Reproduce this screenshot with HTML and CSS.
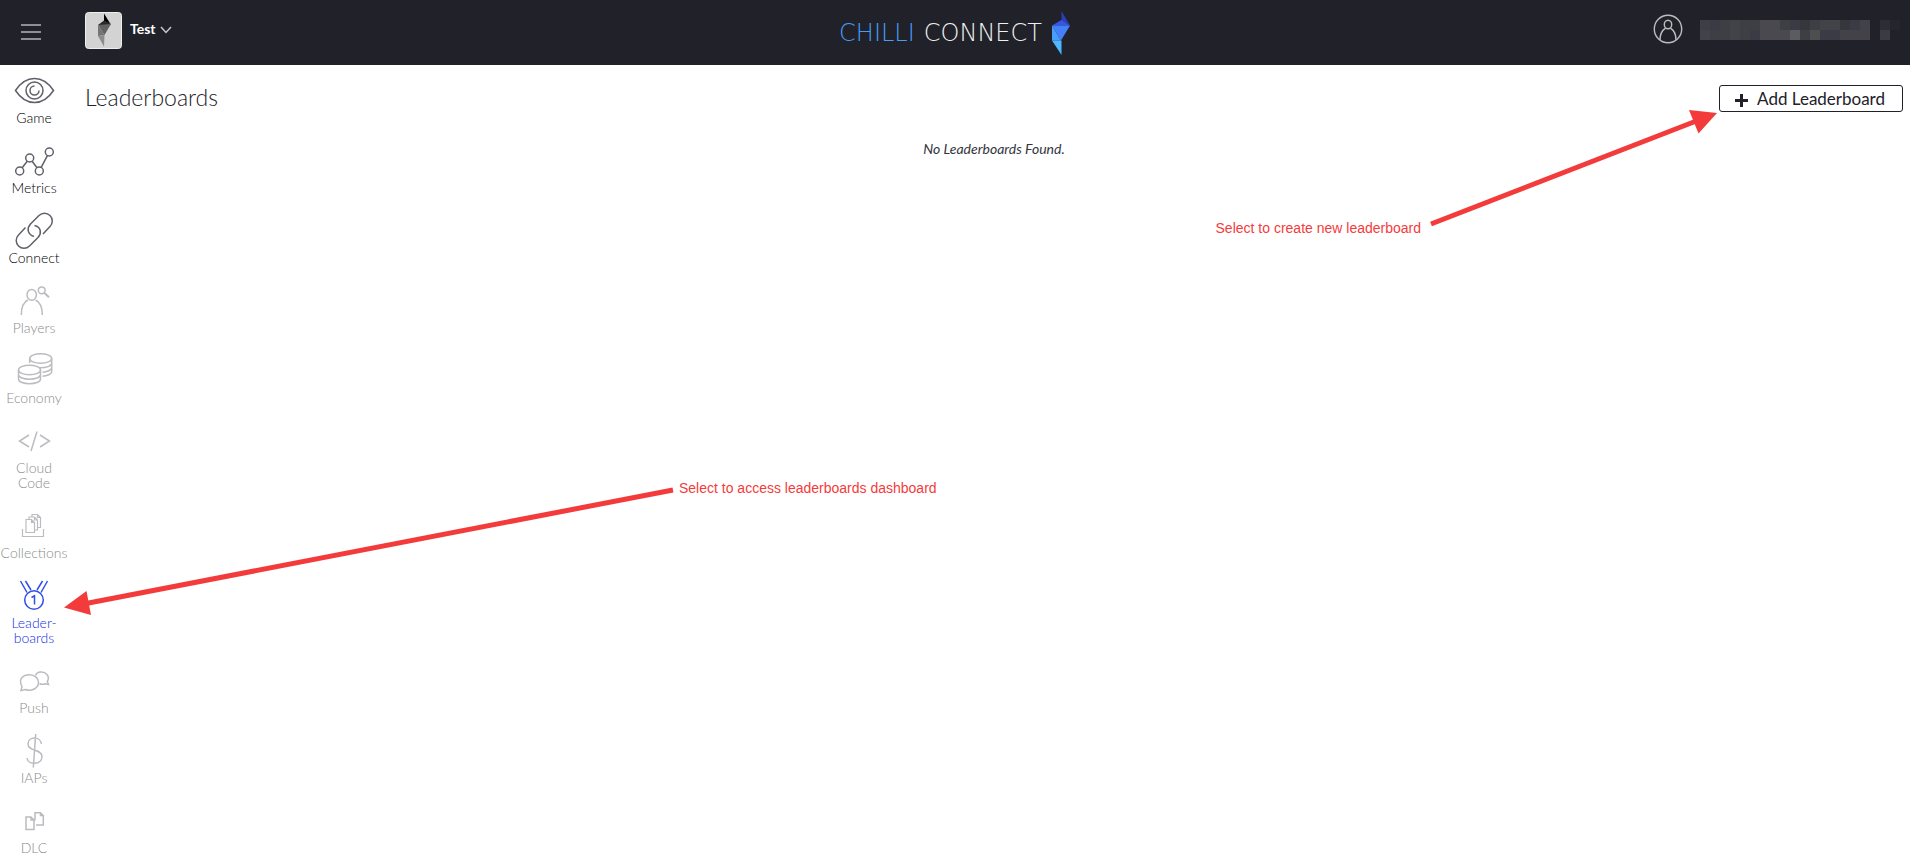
FILE: index.html
```html
<!DOCTYPE html>
<html lang="en">
<head>
<meta charset="utf-8">
<title>ChilliConnect - Leaderboards</title>
<link rel="stylesheet" href="styles.css">
</head>
<body>
<header class="topbar">
  <div class="topbar-left">
    <button class="menu-button" aria-label="Menu">
      <svg width="20" height="18" viewBox="0 0 20 18"><path d="M0 2H20M0 9H20M0 16H20" stroke="#b4b4b7" stroke-width="1.6"/></svg>
    </button>
    <button class="game-picker">
      <svg class="game-icon" width="37" height="37" viewBox="0 0 37 37">
        <rect x=".5" y=".5" width="36" height="36" rx="3" fill="#d3d3d3" stroke="#eee"/>
        <path d="M19 1.500L25.500 12L19 9Z" fill="#000"/>
        <path d="M13 13L19 8.500L26 12L24 13.500Z" fill="#292929"/>
        <path d="M13 13L26 12L19.500 23Z" fill="#626262"/>
        <path d="M13 13V24L19.500 23Z" fill="#747474"/>
        <path d="M13 24L19.500 23L19 34.500Z" fill="#8c8c8c"/>
      </svg>
      <span>Test</span>
      <svg width="12" height="8" viewBox="0 0 12 8"><path d="M1 1L6 6.500L11 1" fill="none" stroke="#c8c8ca" stroke-width="1.500"/></svg>
    </button>
  </div>
  <a class="brand" href="#" aria-label="Chilli Connect">
    <span class="brand-chilli">CHILLI</span>
    <span class="brand-connect">CONNECT</span>
    <svg width="20" height="46" viewBox="0 0 20 46">
      <path d="M10.500 1V10.500L19 15.500Z" fill="#2b3fb5"/>
      <path d="M10.500 10L19 15.500H1Z" fill="#3556e6"/>
      <path d="M1 15.500H19L10 30.500Z" fill="#4480fb"/>
      <path d="M1 15.500V30.500H10Z" fill="#489df9"/>
      <path d="M1 30.500H10.500V45Z" fill="#50b7ff"/>
    </svg>
  </a>
  <div class="account">
    <svg width="30" height="30" viewBox="0 0 30 30" fill="none" stroke="#bdbdc0" stroke-width="1.400">
      <circle cx="15" cy="15" r="13.700"/><ellipse cx="15" cy="10.500" rx="3.700" ry="4.300"/>
      <path d="M7 26C7 19 9 16.500 12.500 14.200M17.500 14.200C21 16.500 23 19 23 26"/>
    </svg>
    <svg width="200" height="20" viewBox="0 0 200 20" shape-rendering="crispEdges">
      <path fill="#3e3e45" d="M0 0H170V20H0Z"/>
      <path fill="#3b3b45" d="M10 0h10v10h-10zM50 10h10v10h-10zM90 0h10v10h-10zM150 0h10v10h-10zM110 10h30v10h-30z"/>
      <path fill="#424248" d="M30 0h10v10h-10zM120 0h20v10h-20zM160 0h10v10h-10zM0 10h10v10h-10zM30 10h10v10h-10zM140 10h30v10h-30z"/>
      <path fill="#49494f" d="M60 0h20v10h-20zM60 10h30v10h-30z"/>
      <path fill="#37363d" d="M100 0h10v10h-10zM140 0h10v10h-10z"/>
      <path fill="#5b5b60" d="M90 10h10v10h-10z"/><path fill="#4e4e51" d="M110 10h10v10h-10z"/>
      <path fill="#2d2d35" d="M180 0h10v10h-10z"/><path fill="#25252d" d="M190 0h10v10h-10z"/><path fill="#3b3b45" d="M180 10h10v10h-10z"/>
    </svg>
  </div>
</header>

<div class="layout">
  <nav class="sidebar">
    <a class="nav-item" href="#">
      <svg class="nav-icon" viewBox="0 0 68 40"><path d="M15.500 20.500C26 4.500 43 4.500 53.500 20.500C43 36.500 26 36.500 15.500 20.500Z"/><circle cx="34.500" cy="20.500" r="8.500"/><path d="M34.500 16A4.500 4.500 0 1 0 39 20.500"/></svg>
      <span>Game</span></a>
    <a class="nav-item" href="#">
      <svg class="nav-icon" viewBox="0 0 68 40"><circle cx="19.700" cy="31" r="4"/><circle cx="29.700" cy="18" r="4"/><circle cx="39.300" cy="31" r="4"/><circle cx="49.300" cy="12" r="4"/><path d="M22.200 27.700L27.200 21.300M32.100 21.300L37 27.700M41.200 27.400L47.400 15.600"/></svg>
      <span>Metrics</span></a>
    <a class="nav-item" href="#">
      <svg class="nav-icon" viewBox="0 0 68 40"><path d="M25.500 17.500L18.500 25A7.600 7.600 0 0 0 29.500 36L38 27.500C42 23 41 17 34.500 15.500"/><path d="M43 24L50 16.500A7.600 7.600 0 0 0 39 5.500L30.500 14C26.500 18.500 27.500 24.500 34 26.500"/></svg>
      <span>Connect</span></a>
    <a class="nav-item muted" href="#">
      <svg class="nav-icon" viewBox="0 0 68 40"><ellipse cx="31.700" cy="14.800" rx="4.700" ry="5.400"/><path d="M21.300 35C21.300 26 23.500 22 28 20M35.500 20C40 22 42.300 26 42.300 35"/><circle cx="41.700" cy="10.300" r="3.400"/><path d="M44.200 12.700L49 17.300" stroke-width="2"/></svg>
      <span>Players</span></a>
    <a class="nav-item muted" href="#">
      <svg class="nav-icon" viewBox="0 0 68 40"><ellipse cx="40.700" cy="8.500" rx="11" ry="4.700"/><path d="M29.700 8.500V13M51.700 8.500V22C51.700 24 47 26 42.500 26.300M51.700 13C51.700 16 46 18 39 17.700M51.700 17.500C51.700 20 47 22 42.500 22.200"/><ellipse cx="29.500" cy="20" rx="11" ry="4.700"/><path d="M18.500 20V29C18.500 35.300 40.500 35.300 40.500 29V20M18.500 24.500C18.500 30.800 40.500 30.800 40.500 24.500"/></svg>
      <span>Economy</span></a>
    <a class="nav-item muted" href="#">
      <svg class="nav-icon" viewBox="0 0 68 40"><path d="M29 15L19.500 21L29 27M40 15L49.500 21L40 27M37 11.500L31 31"/></svg>
      <span>Cloud<br>Code</span></a>
    <a class="nav-item muted" href="#">
      <svg class="nav-icon thin" viewBox="0 0 68 40"><path d="M22.500 24V31.500H43.500V24"/><path d="M26 14.500H31.500L34.500 17.500V27.500H26ZM31.500 14.500V17.500H34.500M29 14.500V12H34.500L37.500 15V25H34.500M34.500 12V15H37.500M32 12V9.500H37.500L40.500 12.500V22.500H37.500M37.500 9.500V12.500H40.500"/></svg>
      <span>Collections</span></a>
    <a class="nav-item active" href="#">
      <svg class="nav-icon" viewBox="0 0 68 40"><circle cx="34" cy="25" r="9.300"/><path d="M20.500 6L27 17.500M25.500 6L31 15M47.500 6L41 17.500M42.500 6L37 15M31.500 22.500L34.500 20.800V29.500"/></svg>
      <span>Leader-<br>boards</span></a>
    <a class="nav-item muted" href="#">
      <svg class="nav-icon" viewBox="0 0 68 40"><path d="M21 30.500L22 26.500C17.500 18 24 14.800 29.500 14.800C35 14.800 38.500 18.500 38.500 22.500C38.500 28 31.500 32 25.500 29.500Z"/><path d="M35.500 15.500C37 11 44 11 47 14.500C49 17 48.500 19.500 47.300 21.500L48.500 24.500L45 23.800C43 24.500 41 24.500 39.500 23.800"/></svg>
      <span>Push</span></a>
    <a class="nav-item muted" href="#">
      <svg class="nav-icon" viewBox="0 0 68 40"><path d="M35.700 4L33.300 37.500M41.500 14C40.500 6 28 6 28 14C28 22 42 18.500 42 26.500C42 35 28 35.500 27 28"/></svg>
      <span>IAPs</span></a>
    <a class="nav-item muted" href="#">
      <svg class="nav-icon" viewBox="0 0 68 40"><path d="M26 17H31L34 20V29.500H26ZM31 17V20H34M35 20.500V12.700H40.500L43.300 15.500V25H36M40.500 12.700V15.500H43.300"/></svg>
      <span>DLC</span></a>
  </nav>

  <main class="content">
    <div class="content-head">
      <h1>Leaderboards</h1>
      <button class="add-button">
        <svg width="13" height="13" viewBox="0 0 13 13"><path d="M6.500 0V13M0 6.500H13" stroke="#212129" stroke-width="3"/></svg>
        Add Leaderboard
      </button>
    </div>
    <p class="empty">No Leaderboards Found.</p>
  </main>
</div>

<div class="note note-create">
  <span>Select to create new leaderboard</span>
  <svg width="287" height="127" viewBox="0 0 287 127"><path d="M1 115L265 12.500" stroke="#f43b3b" stroke-width="5"/><path d="M287 4L259 1L268.500 24.500Z" fill="#f43b3b"/></svg>
</div>
<div class="note note-access">
  <svg width="611" height="128" viewBox="0 0 611 128"><path d="M609 6L22 119.500" stroke="#f43b3b" stroke-width="5"/><path d="M0 123.500L22.500 107L27 131Z" fill="#f43b3b"/></svg>
  <span>Select to access leaderboards dashboard</span>
</div>
</body>
</html>
```
FILE: styles.css
```css
* { box-sizing: border-box; }
body {
  margin: 0;
  background: #fff;
  color: #212129;
  font-family: Lato, "Liberation Sans", sans-serif;
}
button {
  font: inherit;
  color: inherit;
  background: none;
  border: 0;
  padding: 0;
}
a { color: inherit; text-decoration: none; }
svg { flex: none; display: block; }

.topbar {
  display: grid;
  grid-template-columns: 1fr auto 1fr;
  height: 65px;
  background: #212129;
  color: #fff;
}
.topbar-left {
  display: flex;
  align-items: flex-start;
  padding: 12px 0 0 21px;
  gap: 44px;
}
.menu-button { padding-top: 11px; }
.game-picker {
  display: flex;
  align-items: center;
  gap: 8px;
  height: 37px;
  font-size: 14px;
  font-weight: 700;
}
.game-picker span { line-height: 16px; padding-bottom: 4px; }
.game-picker svg:last-child { margin: 0 0 2px -4px; }
.brand {
  display: flex;
  align-items: center;
  gap: 9px;
  font: 200 24px/32px "DejaVu Sans", sans-serif;
}
.brand-chilli { color: #489df9; }
.brand-connect { color: #f0f0f0; }
.account {
  display: flex;
  justify-content: flex-end;
  align-items: flex-start;
  gap: 17px;
  padding-top: 14px;
  padding-right: 10px;
}
.account svg:last-child { margin-top: 6px; }

.layout { display: flex; }
.sidebar {
  flex: none;
  width: 68px;
  padding-top: 5px;
  display: flex;
  flex-direction: column;
  gap: 15px;
}
.nav-item {
  display: block;
  text-align: center;
  font-size: 14px;
  line-height: 15px;
  font-weight: 300;
  color: #000;
}
.nav-item span { display: block; white-space: nowrap; }
.nav-icon {
  width: 68px;
  height: 40px;
  fill: none;
  stroke: #60606b;
  stroke-width: 1.5;
}
.nav-icon.thin { stroke-width: 1.2; }
.nav-item.muted { color: #8c8c8c; }
.muted .nav-icon { stroke: #bcbcc0; }
.nav-item.active { color: #1030e6; }
.active .nav-icon { stroke: #3050e8; }

.content {
  flex: 1;
  padding: 20px 7px 0 17px;
}
.content-head {
  display: flex;
  justify-content: space-between;
  align-items: flex-start;
}
h1 {
  margin: 0;
  font-size: 23px;
  line-height: 25px;
  font-weight: 300;
  color: #212129;
}
.add-button {
  display: flex;
  align-items: center;
  gap: 9px;
  height: 27px;
  padding: 0 17px 0 15px;
  border: 1px solid #212129;
  border-radius: 3px;
  font-size: 17px;
}
.add-button svg { margin-top: 3px; }
.empty {
  margin: 28px 0 0;
  text-align: center;
  font-size: 14px;
  line-height: 18px;
  font-style: italic;
  color: #34343e;
}

.note {
  position: absolute;
  display: flex;
  color: #f43b3b;
  font: 14px/16px "Liberation Sans", Arial, sans-serif;
  white-space: nowrap;
  pointer-events: none;
}
.note svg { overflow: visible; }
.note-create {
  top: 109px;
  right: 193px;
  align-items: flex-end;
  gap: 9px;
}
.note-access {
  top: 484px;
  left: 64px;
  gap: 4px;
}
.note-access span { margin-top: -4px; }
```
